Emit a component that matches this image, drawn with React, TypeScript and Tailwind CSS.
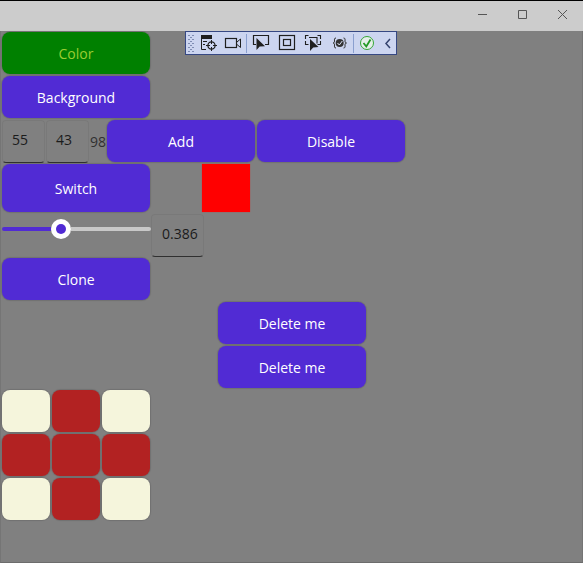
import React from "react";

type ButtonProps = { children: React.ReactNode; className?: string };

const Button = ({ children, className = "h-[42px] bg-[#512bd4] text-white" }: ButtonProps) => (
  <button
    className={`flex w-[148px] shrink-0 items-center justify-center rounded-[8px] pt-[2px] shadow-[0_0_1px_1px_rgba(0,0,0,0.12)] ${className}`}
  >
    {children}
  </button>
);

const Entry = ({ value, className }: { value: string; className: string }) => (
  <div
    className={`shrink-0 rounded-[4px] border border-b-[#303030] border-[#797979] pt-[9px] text-[#1b1b1b] ${className}`}
  >
    {value}
  </div>
);

const grip = [4, 8, 12, 16, 20];

const DebugToolbar = () => (
  <div className="absolute left-[185px] top-[31px] h-6 w-[212px] bg-[#ccd5f0]">
    <svg width="212" height="24" viewBox="0 0 212 24" fill="none" stroke="#1f1f1f">
      <rect x=".5" y=".5" width="211" height="23" stroke="#364883" />
      <g fill="#7f8db3" stroke="none">
        {grip.map((y) => (
          <g key={y}>
            <rect x="3" y={y} width="2" height="1" />
            <rect x="7" y={y} width="2" height="1" />
            {y < 20 && <rect x="5" y={y + 2} width="2" height="1" />}
          </g>
        ))}
      </g>
      {/* live visual tree */}
      <path d="M16 4h11v4H16z" fill="#1f1f1f" stroke="none" />
      <path d="M16.5 7v11.5H21M18 10.5h4M18 13.5h2" />
      <circle cx="26.5" cy="14.5" r="3.6" strokeWidth="1.3" />
      <path d="M26.500 9v4M26.500 16v4M21 14.500h4M28 14.500h4" />
      {/* camera */}
      <rect x="40.500" y="7.500" width="11" height="9" strokeWidth="1.200" />
      <path d="M52 11l3.500-3v8.500L52 13.500" />
      <path d="M61.500 3v19M168.500 3v19" stroke="#8a9fcf" />
      {/* select element */}
      <path d="M71 13.500h-2.500v-9h15v9H80" strokeWidth="1.200" />
      <path d="M71.500 7v12l3.200-3.500 5.300-.3z" fill="#1f1f1f" stroke="none" />
      {/* layout adorners */}
      <rect x="94.500" y="4.500" width="15" height="14" strokeWidth="1.200" />
      <rect x="98.500" y="8.500" width="7" height="6" strokeWidth="1.200" />
      {/* track focus */}
      <path d="M123.500 4.500h-3V8M132.500 4.500h3V8M120.500 10v3.500h3M135.500 10v3.500h-3M124 6.500h8v6" strokeWidth="1.100" />
      <path d="M125 8v12l3.200-3.500 5.300-.5z" fill="#1f1f1f" stroke="none" />
      {/* binding failures */}
      <path d="M151 7c-2 0-1.500 1.500-1.500 3s-.5 2-1.500 2c1 0 1.500.5 1.500 2s-.5 3 1.500 3M158.500 7c2 0 1.500 1.500 1.500 3s.5 2 1.500 2c-1 0-1.500.5-1.500 2s.5 3-1.500 3" stroke="#333" />
      <circle cx="154.700" cy="12" r="4" fill="#333" stroke="none" />
      <path d="M152.500 12l1.800 2 3-4" stroke="#dde3f5" />
      {/* hot reload */}
      <circle cx="182" cy="12" r="6.500" fill="#e5efe9" stroke="#35a735" />
      <path d="M178.500 12l2.800 3.500 4.200-7" stroke="#219a24" strokeWidth="1.800" />
      <path d="M205 8l-4 4.500 4 4.500" stroke="#35436e" strokeWidth="1.500" />
    </svg>
  </div>
);

const tiles = [0, 1, 0, 1, 1, 1, 0, 1, 0];

export default function App() {
  return (
    <div className="relative flex h-[563px] w-[583px] flex-col overflow-hidden bg-[#808080] font-['Open_Sans','Noto_Sans',sans-serif] text-[14px] leading-[20px]">
      <header className="h-[31px] shrink-0 border-t border-black bg-[#cccccc] pr-px">
        <svg width="582" height="30" viewBox="0 1 582 30" fill="none" stroke="#555">
          <path d="M478 14.500h9M518.500 10.500h8v8h-8zM558 10l9 9M567 10l-9 9" />
        </svg>
      </header>

      <main className="flex flex-1 flex-col items-start gap-[2px] border-x border-b border-x-[#757575] border-b-[#6c6c6c] pl-px pt-px">
        <Button className="h-[42px] bg-[#008000] text-[#9acd32]">Color</Button>
        <Button>Background</Button>
        <div className="flex h-[42px]">
          <Entry value="55" className="h-[43px] w-[43px] pl-[9px]" />
          <Entry value="43" className="ml-px h-[43px] w-[43px] pl-[9px]" />
          <span className="w-[18px] pl-px pt-[12px] text-[#303030]">98</span>
          <div className="flex gap-[2px]">
            <Button>Add</Button>
            <Button>Disable</Button>
          </div>
        </div>
        <div className="flex h-12 gap-[52px]">
          <Button className="h-12 bg-[#512bd4] text-white">Switch</Button>
          <div className="h-12 w-12 bg-[#ff0000] shadow-[0_0_1px_rgba(255,0,0,0.6)]" />
        </div>
        <div className="flex h-[42px]">
          <div className="flex h-[30px] w-[149px] items-center">
            <div className="h-1 w-[49px] rounded-l-full bg-[#512bd4]" />
            <div className="flex h-5 w-5 items-center justify-center rounded-full bg-white">
              <div className="h-[10px] w-[10px] rounded-full bg-[#512bd4]" />
            </div>
            <div className="h-1 flex-1 rounded-r-full bg-[#c8c8c8]" />
          </div>
          <Entry value="0.386" className="h-[43px] w-[53px] pl-[10px]" />
        </div>
        <Button>Clone</Button>
        <div className="ml-[216px] flex flex-col gap-[2px]">
          <Button>Delete me</Button>
          <Button>Delete me</Button>
        </div>
        <div className="grid grid-cols-3 gap-[2px]">
          {tiles.map((filled, i) => (
            <div
              key={i}
              className={`h-[42px] w-12 rounded-[8px] shadow-[0_0_1px_1px_rgba(0,0,0,0.12)] ${filled ? "bg-[#b22222]" : "bg-[#f5f5dc]"}`}
            />
          ))}
        </div>
      </main>
      <DebugToolbar />
    </div>
  );
}
